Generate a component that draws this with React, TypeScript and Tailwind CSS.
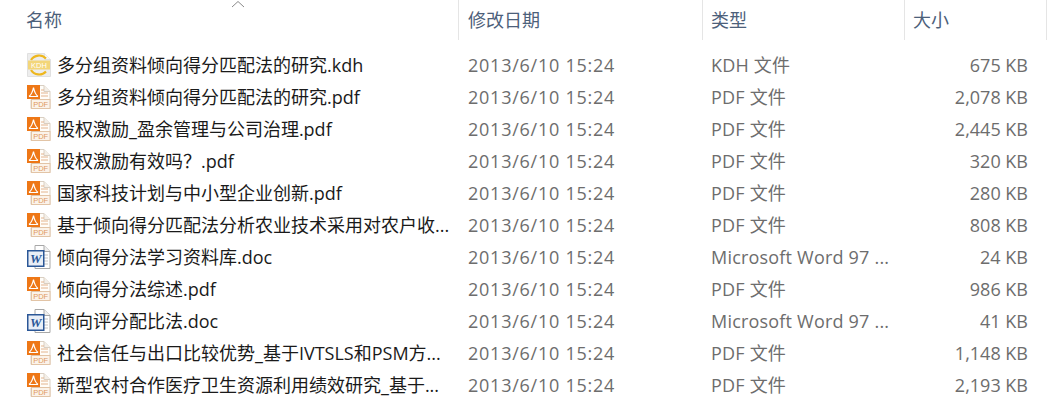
const FONT = "font-['Open_Sans','Noto_Sans_CJK_SC',sans-serif]";

const FILES = [
  { name: "多分组资料倾向得分匹配法的研究.kdh", icon: "kdh", type: "KDH 文件", size: "675 KB" },
  { name: "多分组资料倾向得分匹配法的研究.pdf", icon: "pdf", type: "PDF 文件", size: "2,078 KB" },
  { name: "股权激励_盈余管理与公司治理.pdf", icon: "pdf", type: "PDF 文件", size: "2,445 KB" },
  { name: "股权激励有效吗？.pdf", icon: "pdf", type: "PDF 文件", size: "320 KB" },
  { name: "国家科技计划与中小型企业创新.pdf", icon: "pdf", type: "PDF 文件", size: "280 KB" },
  { name: "基于倾向得分匹配法分析农业技术采用对农户收...", icon: "pdf", type: "PDF 文件", size: "808 KB" },
  { name: "倾向得分法学习资料库.doc", icon: "doc", type: "Microsoft Word 97 ...", size: "24 KB" },
  { name: "倾向得分法综述.pdf", icon: "pdf", type: "PDF 文件", size: "986 KB" },
  { name: "倾向评分配比法.doc", icon: "doc", type: "Microsoft Word 97 ...", size: "41 KB" },
  { name: "社会信任与出口比较优势_基于IVTSLS和PSM方...", icon: "pdf", type: "PDF 文件", size: "1,148 KB" },
  { name: "新型农村合作医疗卫生资源利用绩效研究_基于...", icon: "pdf", type: "PDF 文件", size: "2,193 KB" },
];

function PdfIcon() {
  return (
    <svg width="24" height="24" viewBox="0 0 24 24" className="shrink-0">
      <path d="M8 .5h9l6 6v17H4v-9" fill="#fffdf9" stroke="#d9cfc2" />
      <path d="M17 .5v6h6" fill="#f4efe8" stroke="#d9cfc2" />
      <path d="M14 5h3M14 8h7M14 11h7" stroke="#e3b48e" />
      <rect x="0" y="0" width="13" height="14" fill="#ee7716" />
      {/* acrobat swoosh */}
      <path d="M2 11.5C4.5 9.5 5.8 6 6.5 2.5 7.2 6 8.5 9.5 11 11.5M2 11.5h9" fill="none" stroke="#fff" strokeWidth="1.2" />
      <rect x="4.5" y="14.5" width="18.5" height="9" fill="#fbf3ea" stroke="#e2c4a6" />
      <text x="13.7" y="22" textAnchor="middle" fontSize="7.5" fill="#e09a5e" fontFamily="Liberation Sans">PDF</text>
    </svg>
  );
}

function DocIcon() {
  return (
    <svg width="24" height="24" viewBox="0 0 24 24" className="shrink-0">
      <path d="M8 .5h9l6 6v17H8z" fill="#fff" stroke="#a8a8a8" />
      <path d="M17 .5v6h6" fill="#efefef" stroke="#a8a8a8" />
      <path d="M17 10h4M17 13h4M17 16h4M17 19h4" stroke="#c4c4c4" />
      <rect x="0.75" y="5.75" width="16" height="15.5" fill="#e8eef7" stroke="#2b5797" strokeWidth="1.5" />
      <text x="8.8" y="18" textAnchor="middle" fontSize="13" fontWeight="700" fontStyle="italic" fill="#2b5797" fontFamily="Liberation Serif">W</text>
    </svg>
  );
}

function KdhIcon() {
  return (
    <svg width="24" height="24" viewBox="0 0 24 24" className="shrink-0">
      <path d="M.5.5h17l6 6v17H.5z" fill="#ededed" stroke="#e0e0e0" />
      <path d="M17.5.5v6h6" fill="#f8f8f8" stroke="#e0e0e0" />
      <path d="M19 5.5A9.5 9.5 0 0 0 4 7M4 17A9.5 9.5 0 0 0 19 18.5" fill="none" stroke="#eeb71e" strokeWidth="2.2" />
      <rect x="1" y="7.5" width="22" height="9" fill="#f3d67a" />
      <text x="12" y="15" textAnchor="middle" fontSize="7.5" fill="#fff" fontFamily="Liberation Sans">KDH</text>
    </svg>
  );
}

function FileIcon({ kind }: { kind: string }) {
  if (kind === "pdf") return <PdfIcon />;
  if (kind === "doc") return <DocIcon />;
  return <KdhIcon />;
}

export default function App() {
  return (
    <div className={`relative h-[415px] w-[1049px] overflow-hidden bg-white ${FONT}`}>
      {/* sort arrow sits over the name column header */}
      <svg width="14" height="8" viewBox="0 0 14 8" className="absolute left-[231px] top-0">
        <path d="M1 7 7 1.5 13 7" fill="none" stroke="#8a8a8a" />
      </svg>

      <div className="flex h-[40px] text-[18px] text-[#4c607a]">
        <div className="flex w-[458px] items-center pl-[26px]">名称</div>
        <div className="flex w-[244px] items-center border-l border-[#e5e5e5] pl-[9px]">修改日期</div>
        <div className="flex w-[202px] items-center border-l border-[#e5e5e5] pl-[8px]">类型</div>
        <div className="flex w-[143px] items-center border-x border-[#e5e5e5] pl-[8px]">大小</div>
      </div>

      <div className="pt-[9px]">
        {FILES.map((f) => (
          <div key={f.name} className="flex h-[32px] items-center text-[18px] text-[#6d6d6d]">
            <div className="flex w-[458px] items-center gap-[6px] pl-[27px] text-[#1a1a1a]">
              <FileIcon kind={f.icon} />
              <span className="whitespace-nowrap">{f.name}</span>
            </div>
            <div className="w-[244px] pl-[10px] tracking-[0.75px] whitespace-nowrap">2013/6/10 15:24</div>
            <div className="w-[202px] pl-[9px] tracking-[0.2px] whitespace-nowrap">{f.type}</div>
            <div className="w-[124px] text-right whitespace-nowrap">{f.size}</div>
          </div>
        ))}
      </div>
    </div>
  );
}
